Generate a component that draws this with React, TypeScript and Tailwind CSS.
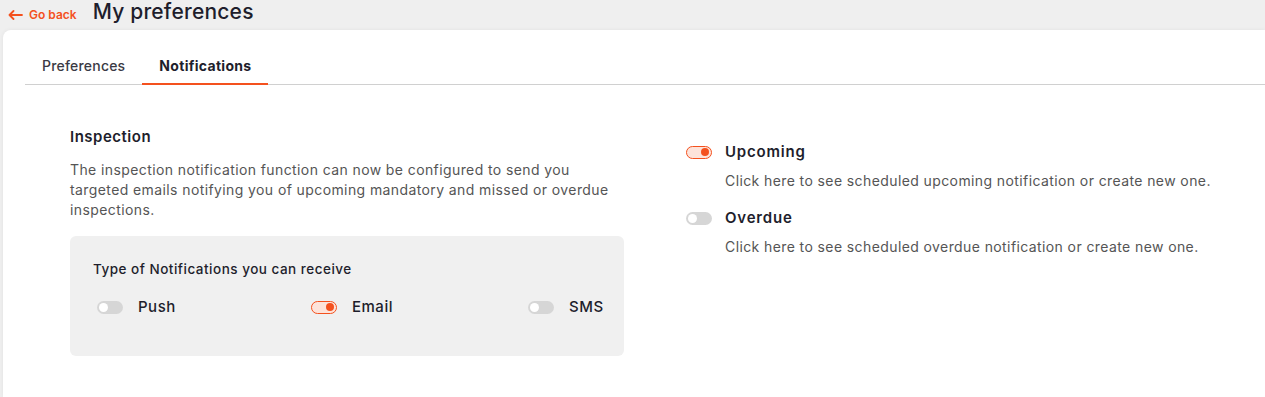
import React from "react";

function Toggle({ on }: { on: boolean }) {
  return on ? (
    <span className="relative inline-block w-[26px] h-[13px] rounded-full border border-[#f4511e] bg-[#fde3da] shrink-0">
      <span className="absolute right-[2px] top-[1.5px] w-[8px] h-[8px] rounded-full bg-[#f4511e]" />
    </span>
  ) : (
    <span className="relative inline-block w-[26px] h-[13px] rounded-full bg-[#d6d6d6] shrink-0">
      <span className="absolute left-[2px] top-[2px] w-[9px] h-[9px] rounded-full bg-white" />
    </span>
  );
}

export default function App() {
  return (
    <div
      className="w-[1265px] h-[397px] bg-[#efefef] overflow-hidden flex flex-col"
      style={{ fontFamily: 'Inter, "Noto Sans", sans-serif' }}
    >
      <div className="h-[30px] flex items-center pl-[8px] gap-[16px]">
        <div className="flex items-center gap-[6px] text-[#f4511e] text-[12px] font-semibold">
          <svg width="15" height="10" viewBox="0 0 15 10" fill="none" stroke="#f4511e" strokeWidth="1.8" strokeLinecap="round" strokeLinejoin="round">
            <path d="M14 5H1.5M5.5 1L1.5 5l4 4" />
          </svg>
          <span>Go back</span>
        </div>
        <div className="text-[21px] text-[#1e1e2c] font-medium leading-none -mt-[8px] tracking-[0.2px]">My preferences</div>
      </div>
      <div className="ml-[3px] flex-1 bg-white rounded-tl-[8px] shadow-[0_0_4px_rgba(0,0,0,0.06)] pl-[22px]">
        <div className="mt-[20px] flex border-b border-[#d0d0d0] h-[35px]">
          <div className="px-[17px] pb-[3px] flex items-center text-[14px] text-[#3a3a44] font-medium tracking-[0.2px]">Preferences</div>
          <div className="px-[17px] pb-[3px] flex items-center text-[14px] text-[#1e1e2c] font-bold tracking-[0.3px] border-b-2 border-[#f4511e] -mb-[1px]">Notifications</div>
        </div>
        <div className="flex pl-[45px] pt-[42px]">
          <div className="w-[554px]">
            <div className="text-[15px] font-semibold text-[#1e1e2c] leading-[20px] tracking-[0.5px]">Inspection</div>
            <div className="mt-[13px] text-[14px] text-[#555] leading-[20px] tracking-[0.4px] w-[554px] whitespace-nowrap">
              The inspection notification function can now be configured to send you
              <br />
              targeted emails notifying you of upcoming mandatory and missed or overdue
              <br />
              inspections.
            </div>
            <div className="mt-[16px] h-[120px] bg-[#f0f0f0] rounded-[6px] pl-[23px] pt-[24px]">
              <div className="text-[13.5px] text-[#1e1e2c] font-medium leading-[18px] tracking-[0.5px]">Type of Notifications you can receive</div>
              <div className="mt-[18px] flex items-center">
                <div className="w-[218px] flex items-center gap-[15px] pl-[4px]">
                  <Toggle on={false} />
                  <span className="text-[15px] font-medium text-[#1e1e2c] tracking-[0.5px]">Push</span>
                </div>
                <div className="w-[217px] flex items-center gap-[15px]">
                  <Toggle on={true} />
                  <span className="text-[15px] font-medium text-[#1e1e2c] tracking-[0.5px]">Email</span>
                </div>
                <div className="flex items-center gap-[15px]">
                  <Toggle on={false} />
                  <span className="text-[15px] font-medium text-[#1e1e2c] tracking-[0.5px]">SMS</span>
                </div>
              </div>
            </div>
          </div>
          <div className="ml-[62px] pt-[16px]">
            <div className="flex items-center gap-[13px]">
              <Toggle on={true} />
              <span className="text-[15px] font-semibold text-[#1e1e2c] leading-[18px] tracking-[0.8px]">Upcoming</span>
            </div>
            <div className="mt-[11px] ml-[39px] text-[14px] text-[#555] leading-[18px] tracking-[0.4px] whitespace-nowrap">
              Click here to see scheduled upcoming notification or create new one.
            </div>
            <div className="mt-[19px] flex items-center gap-[13px]">
              <Toggle on={false} />
              <span className="text-[15px] font-semibold text-[#1e1e2c] leading-[18px] tracking-[0.8px]">Overdue</span>
            </div>
            <div className="mt-[11px] ml-[39px] text-[14px] text-[#555] leading-[18px] tracking-[0.4px] whitespace-nowrap">
              Click here to see scheduled overdue notification or create new one.
            </div>
          </div>
        </div>
      </div>
    </div>
  );
}
